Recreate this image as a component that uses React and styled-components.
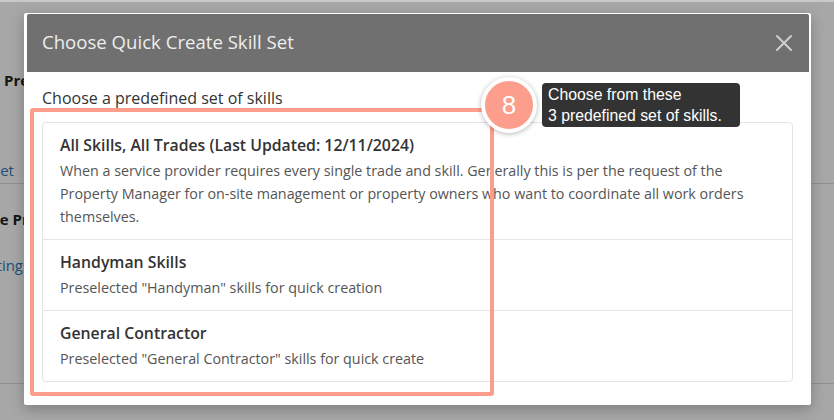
import React from 'react';
import styled, { createGlobalStyle } from 'styled-components';

const Global = createGlobalStyle`
  html, body {
    margin: 0;
    padding: 0;
    background: #fff;
    font-family: "Open Sans", "Liberation Sans", sans-serif;
  }
`;

const Page = styled.div`
  position: relative;
  width: 834px;
  height: 420px;
  overflow: hidden;
  background: #fff;
  border-top: 2px solid #c9c9c9;
  box-sizing: border-box;
`;

const Panel = styled.div`
  display: flex;
  flex-direction: column;
  padding-top: ${p => p.$top}px;
  border-bottom: 1px solid #ddd;
  height: ${p => p.$height}px;
  box-sizing: border-box;
  overflow: hidden;
`;

const PageHeading = styled.div`
  font-size: 15px;
  font-weight: 700;
  color: #222;
  white-space: nowrap;
  margin-left: ${p => p.$shift}px;
`;

const PageLink = styled.div`
  font-size: 15px;
  color: #337ab7;
  white-space: nowrap;
  margin-left: ${p => p.$shift}px;
  margin-top: ${p => p.$gap}px;
`;

const Backdrop = styled.div`
  position: absolute;
  inset: 0;
  background: rgba(0, 0, 0, 0.345);
`;

const Modal = styled.div`
  position: absolute;
  left: 24px;
  top: 11px;
  width: 787px;
  background: #fff;
  border-radius: 2px;
  box-shadow: 0 4px 14px rgba(0, 0, 0, 0.25);
`;

const Header = styled.div`
  display: flex;
  align-items: center;
  justify-content: space-between;
  height: 58px;
  margin: 1px 2px 0 3px;
  padding: 0 16px 0 15px;
  background: #707070;
  border-radius: 2px 2px 0 0;
`;

const Title = styled.h4`
  margin: 0 0 4px;
  font-size: 18.6px;
  font-weight: 400;
  color: #ededed;
`;

const Close = styled.button`
  display: flex;
  padding: 0;
  border: 0;
  background: none;
  cursor: pointer;
`;

const Body = styled.div`
  padding: 15px 18px 23px;
`;

const Label = styled.div`
  font-size: 16px;
  line-height: 22px;
  color: #333;
  margin-bottom: 13px;
`;

const List = styled.div`
  border: 1px solid #e3e3e3;
  border-radius: 4px;
`;

const Item = styled.div`
  padding: 11px 17px 11px;
  & + & {
    border-top: 1px solid #e6e6e6;
  }
`;

const ItemTitle = styled.div`
  font-size: 15.8px;
  font-weight: 600;
  line-height: 22px;
  color: #333;
  margin-bottom: 3px;
`;

const ItemText = styled.div`
  font-size: 14.3px;
  line-height: 23px;
  color: #555;
`;

const Highlight = styled.div`
  position: absolute;
  left: 30px;
  top: 106px;
  width: 464px;
  height: 288px;
  box-sizing: border-box;
  border: 4px solid #fd9d8b;
  border-radius: 3px;
`;

const Badge = styled.div`
  position: absolute;
  left: 481px;
  top: 75px;
  width: 48px;
  height: 48px;
  border: 4px solid #fff;
  border-radius: 50%;
  background: #fd9d8b;
  box-shadow: 0 1px 5px rgba(0, 0, 0, 0.3);
  display: flex;
  align-items: center;
  justify-content: center;
  color: #fff;
  font-family: "Liberation Sans", Arial, sans-serif;
  font-size: 26px;
`;

const Tip = styled.div`
  position: absolute;
  left: 542px;
  top: 81px;
  width: 198px;
  height: 44px;
  box-sizing: border-box;
  padding: 1px 6px;
  background: #333;
  border-radius: 4px;
  color: #fff;
  font-family: "Liberation Sans", Arial, sans-serif;
  font-size: 15.8px;
  line-height: 21px;
  white-space: nowrap;
`;

const skills = [
  {
    title: 'All Skills, All Trades (Last Updated: 12/11/2024)',
    text: 'When a service provider requires every single trade and skill. Generally this is per the request of the Property Manager for on-site management or property owners who want to coordinate all work orders themselves.',
  },
  {
    title: 'Handyman Skills',
    text: 'Preselected "Handyman" skills for quick creation',
  },
  {
    title: 'General Contractor',
    text: 'Preselected "General Contractor" skills for quick create',
  },
];

const CloseIcon = () => (
  <svg width="18" height="18" viewBox="0 0 18 18">
    <path d="M2 2 L16 16 M16 2 L2 16" stroke="#cfcfcf" strokeWidth="2" strokeLinecap="round" />
  </svg>
);

export default function App() {
  return (
    <>
      <Global />
      <Page>
        <Panel $top={68} $height={182}>
          <PageHeading $shift={4}>Preferred Trades</PageHeading>
          <PageLink $shift={-70} $gap={70}>Edit Skill Set</PageLink>
        </Panel>
        <Panel $top={25} $height={200}>
          <PageHeading $shift={-45}>Service Preferences</PageHeading>
          <PageLink $shift={-56} $gap={26}>Edit Settings</PageLink>
        </Panel>
        <Backdrop />
        <Modal>
          <Header>
            <Title>Choose Quick Create Skill Set</Title>
            <Close aria-label="Close"><CloseIcon /></Close>
          </Header>
          <Body>
            <Label>Choose a predefined set of skills</Label>
            <List>
              {skills.map(s => (
                <Item key={s.title}>
                  <ItemTitle>{s.title}</ItemTitle>
                  <ItemText>{s.text}</ItemText>
                </Item>
              ))}
            </List>
          </Body>
        </Modal>
        <Highlight />
        <Badge>8</Badge>
        <Tip>Choose from these<br />3 predefined set of skills.</Tip>
      </Page>
    </>
  );
}
